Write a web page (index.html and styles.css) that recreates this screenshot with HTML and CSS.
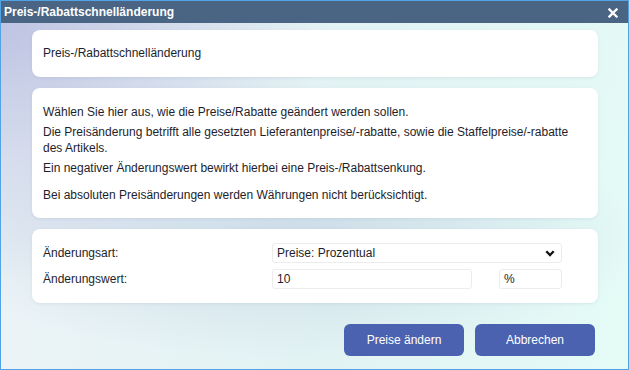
FILE: index.html
```html
<!DOCTYPE html>
<html lang="de">
<head>
<meta charset="utf-8">
<title>Preis-/Rabattschnelländerung</title>
<link rel="stylesheet" href="styles.css">
</head>
<body>
<div class="window">
  <div class="titlebar">
    <span class="title">Preis-/Rabattschnelländerung</span>
    <span class="close" aria-label="Schließen">
      <svg width="10" height="10" viewBox="0 0 10 10"><path d="M1.5 1.5 L8.5 8.5 M8.5 1.5 L1.5 8.5" stroke="#fff" stroke-width="2.3" stroke-linecap="square"/></svg>
    </span>
  </div>
  <div class="content">
    <div class="card card-head">Preis-/Rabattschnelländerung</div>
    <div class="card card-info">
      <p>Wählen Sie hier aus, wie die Preise/Rabatte geändert werden sollen.</p>
      <p>Die Preisänderung betrifft alle gesetzten Lieferantenpreise/-rabatte, sowie die Staffelpreise/-rabatte des Artikels.</p>
      <p>Ein negativer Änderungswert bewirkt hierbei eine Preis-/Rabattsenkung.</p>
      <p class="spaced">Bei absoluten Preisänderungen werden Währungen nicht berücksichtigt.</p>
    </div>
    <div class="card card-form">
      <div class="row">
        <label class="label">Änderungsart:</label>
        <div class="select">
          <span>Preise: Prozentual</span>
          <svg width="10" height="7" viewBox="0 0 10 7"><path d="M1.3 1.3 L5 5 L8.7 1.3" fill="none" stroke="#111" stroke-width="2.3"/></svg>
        </div>
      </div>
      <div class="row">
        <label class="label">Änderungswert:</label>
        <div class="inputs">
          <div class="input value">10</div>
          <div class="input unit">%</div>
        </div>
      </div>
    </div>
    <div class="buttons">
      <button class="btn">Preise ändern</button>
      <button class="btn">Abbrechen</button>
    </div>
  </div>
</div>
</body>
</html>
```

FILE: styles.css
```css
html, body {
  margin: 0;
  padding: 0;
}
body {
  font-family: "Liberation Sans", Arial, sans-serif;
  font-size: 12px;
  color: #1e1e2c;
}
.window {
  width: 629px;
  height: 370px;
  box-sizing: border-box;
  border: 1px solid #52a3e6;
  display: flex;
  flex-direction: column;
  overflow: hidden;
}
.titlebar {
  height: 22px;
  background: #4a6584;
  display: flex;
  align-items: center;
  justify-content: space-between;
  padding: 0 10px 0 3px;
  flex: none;
}
.title {
  color: #fff;
  font-weight: bold;
  font-size: 12px;
  line-height: 15px;
  padding-top: 1px;
}
.close {
  display: flex;
  width: 10px;
  height: 10px;
  margin-top: 2px;
}
.content {
  flex: 1;
  padding: 7px 30px 0 31px;
  background:
    radial-gradient(ellipse 330px 260px at 0% 0%, rgba(190,196,226,1) 0%, rgba(190,196,226,0.55) 45%, rgba(190,196,226,0) 100%),
    radial-gradient(ellipse 360px 120px at 45% 62%, rgba(196,212,228,0.75) 0%, rgba(196,212,228,0) 100%),
    linear-gradient(100deg, #edf3f7 0%, #e2f3f3 55%, #e4fbf6 100%);
  display: flex;
  flex-direction: column;
  gap: 11px;
}
.card {
  background: #fff;
  border-radius: 8px;
  box-shadow: 0 1px 3px rgba(120, 140, 170, 0.15);
  padding: 16px 11px;
  line-height: 15px;
}
.card-info {
  line-height: 16px;
  padding: 16px 11px 15px;
}
.card-info p {
  margin: 0 0 4px 0;
}
.card-info p:last-child {
  margin-bottom: 0;
}
.card-info p.spaced {
  margin-top: 11px;
}
.card-form {
  padding: 14px 11px;
  display: flex;
  flex-direction: column;
  gap: 6px;
}
.row {
  display: flex;
  align-items: center;
  height: 20px;
}
.label {
  width: 229px;
  flex: none;
}
.select {
  width: 290px;
  height: 20px;
  box-sizing: border-box;
  border: 1px solid #ececec;
  border-radius: 3px;
  display: flex;
  align-items: center;
  justify-content: space-between;
  padding: 0 6px 0 4px;
}
.select svg {
  margin-top: 1px;
}
.inputs {
  display: flex;
  gap: 27px;
}
.input {
  height: 20px;
  box-sizing: border-box;
  border: 1px solid #ececec;
  border-radius: 3px;
  padding: 0 4px;
  display: flex;
  align-items: center;
}
.value {
  width: 200px;
}
.unit {
  width: 63px;
}
.buttons {
  display: flex;
  justify-content: flex-end;
  gap: 11px;
  padding: 10px 3px 0 0;
}
.btn {
  width: 120px;
  height: 32px;
  border: none;
  border-radius: 6px;
  background: #4b62b0;
  color: #fff;
  font-family: "Liberation Sans", Arial, sans-serif;
  font-size: 12px;
  padding: 0;
}
```
